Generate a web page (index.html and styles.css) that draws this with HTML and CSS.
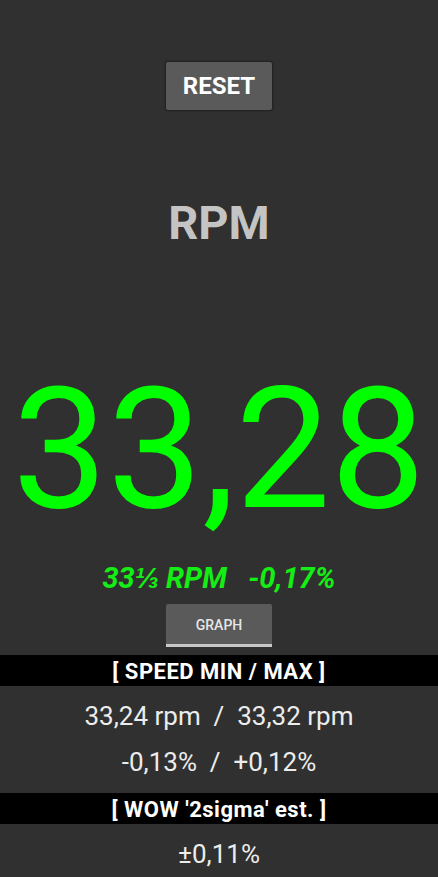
FILE: index.html
```html
<!DOCTYPE html>
<html lang="en">
<head>
  <meta charset="UTF-8" />
  <meta name="viewport" content="width=device-width, initial-scale=1.0" />
  <title>RPM</title>
  <link rel="stylesheet" href="styles.css">
</head>
<body>
  <div class="screen">
    <button class="reset-btn">RESET</button>

    <div class="unit">RPM</div>

    <div class="speed">33,28</div>

    <div class="target">33⅓ RPM   -0,17%</div>

    <button class="graph-btn">GRAPH</button>

    <div class="section-title">[ SPEED MIN / MAX ]</div>
    <div class="section-body">
      <div class="stat">33,24 rpm  /  33,32 rpm</div>
      <div class="stat">-0,13%  /  +0,12%</div>
    </div>

    <div class="section-title">[ WOW '2sigma' est. ]</div>
    <div class="section-body">
      <div class="stat">±0,11%</div>
    </div>
  </div>
</body>
</html>
```

FILE: styles.css
```css
body {
  margin: 0;
  padding: 0;
  background-color: #303030;
  font-family: Roboto, "Liberation Sans", sans-serif;
}

.screen {
  display: flex;
  flex-direction: column;
  align-items: center;
  width: 438px;
}

.screen > * {
  flex-shrink: 0;
}

button {
  border: none;
  font-family: Roboto, "Liberation Sans", sans-serif;
  cursor: pointer;
}

.reset-btn {
  margin-top: 62px;
  width: 106px;
  height: 48px;
  background-color: #5a5a5a;
  color: #fff;
  font-size: 24px;
  font-weight: bold;
  border-radius: 2px;
  box-shadow: 0 0 2px 1px rgba(0, 0, 0, 0.35);
}

.unit {
  margin-top: 89px;
  height: 47px;
  line-height: 47px;
  font-size: 47px;
  font-weight: bold;
  color: #c4c4c4;
}

.speed {
  margin-top: 119px;
  height: 169px;
  line-height: 169px;
  font-size: 169px;
  color: #00ff00;
}

.target {
  margin-top: 30px;
  height: 29px;
  line-height: 29px;
  font-size: 29px;
  font-weight: bold;
  font-style: italic;
  color: #14ee14;
  white-space: pre;
}

.graph-btn {
  margin-top: 11px;
  width: 106px;
  height: 43px;
  padding-top: 3px;
  background-color: #5a5a5a;
  color: #e6e6e6;
  font-size: 14px;
  font-weight: 500;
  border-bottom: 3px solid #c8c8c8;
  border-radius: 2px 2px 0 0;
}

.section-title {
  align-self: stretch;
  box-sizing: border-box;
  height: 31px;
  padding-top: 3px;
  line-height: 28px;
  margin-top: 8px;
  background-color: #000;
  color: #fff;
  text-align: center;
  font-size: 22px;
  font-weight: bold;
  letter-spacing: 0.5px;
}

.section-body + .section-title {
  margin-top: 0;
}

.section-body {
  align-self: stretch;
  padding: 7px 0 8px;
}

.stat {
  height: 46px;
  line-height: 46px;
  text-align: center;
  font-size: 26px;
  color: #ececec;
  white-space: pre;
}
```
